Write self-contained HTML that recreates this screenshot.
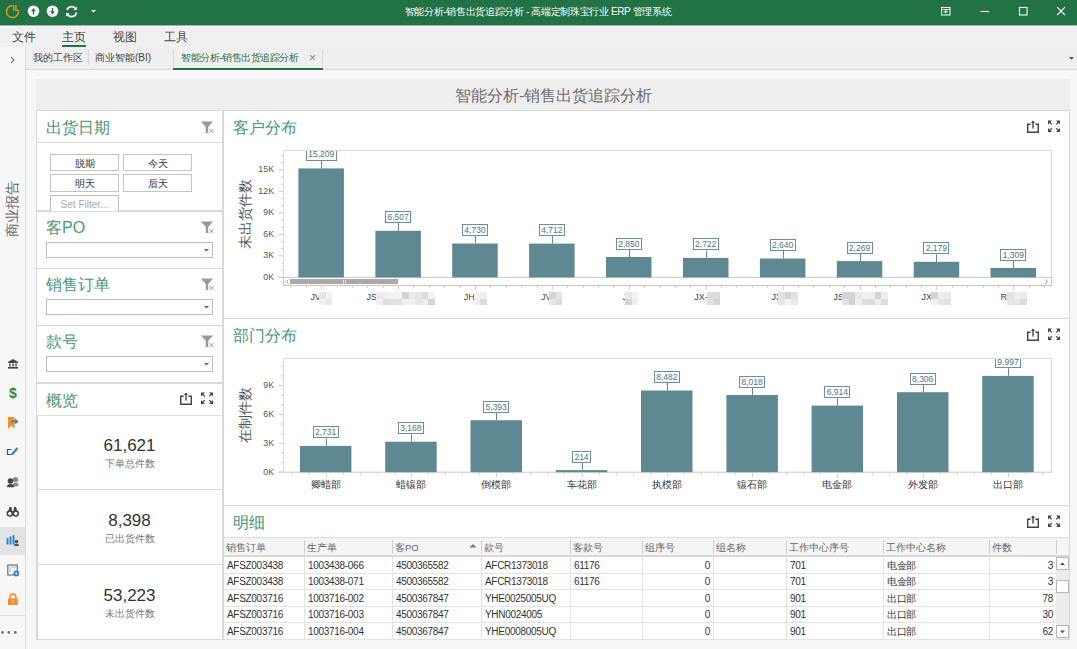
<!DOCTYPE html><html><head><meta charset="utf-8"><style>
*{box-sizing:border-box;margin:0;padding:0}
html,body{width:1077px;height:649px;overflow:hidden;background:#f7f7f7;font-family:"Liberation Sans",sans-serif;color:#333}
.a{position:absolute}
.t{position:absolute;white-space:nowrap;line-height:1}
svg{position:absolute;overflow:visible}
</style></head><body>
<div class="a" style="left:0;top:0;width:1077px;height:25px;background:#217346"></div>
<div class="a" style="left:0;top:25px;width:1077px;height:1px;background:#98b8a4"></div><div class="a" style="left:0;top:26px;width:1077px;height:1px;background:#f8f8f8"></div>
<svg style="left:0;top:0" width="1077" height="25">
<path d="M12.5 5.5 A6 6 0 1 0 18.5 11.5" fill="none" stroke="#e8980c" stroke-width="1.6"/>
<path d="M13.6 5 V10.4 M15.9 5 V10.4 H19" fill="none" stroke="#e8980c" stroke-width="1.4"/>
<circle cx="33.5" cy="11.2" r="5.8" fill="#fff"/>
<path d="M31.1 11.2 H35.9 L33.5 8 Z" fill="#217346"/><rect x="32.8" y="10.6" width="1.4" height="3.6" fill="#217346"/>
<circle cx="52.5" cy="11.2" r="5.8" fill="#fff"/>
<path d="M50.1 11.2 H54.9 L52.5 14.4 Z" fill="#217346"/><rect x="51.8" y="8" width="1.4" height="3.6" fill="#217346"/>
<path d="M67 10 A5 5 0 0 1 76 9" fill="none" stroke="#fff" stroke-width="1.6"/>
<path d="M77 6.5 V10 H73.5 Z" fill="#fff"/>
<path d="M76.5 12.5 A5 5 0 0 1 67.2 14" fill="none" stroke="#fff" stroke-width="1.6"/>
<path d="M66 16.5 V13 H69.5 Z" fill="#fff"/>
<path d="M91 10 H96 L93.5 12.6 Z" fill="#fff"/>
<rect x="941.5" y="7.5" width="8.5" height="7.5" fill="none" stroke="#fff" stroke-width="1"/>
<path d="M941.5 9.5 H950 M943.5 11.8 H948 M945.7 10.2 V13.5" fill="none" stroke="#fff" stroke-width="1"/>
<path d="M980.5 11.5 H989" stroke="#fff" stroke-width="1.1"/>
<rect x="1019.5" y="7.5" width="7.5" height="7.5" fill="none" stroke="#fff" stroke-width="1.1"/>
<path d="M1057.2 7.2 L1065 15 M1065 7.2 L1057.2 15" stroke="#fff" stroke-width="1.1"/>
</svg>
<div class="t" style="left:400px;top:7px;width:276px;font-size:10px;letter-spacing:-0.35px;color:#fff;text-align:center">智能分析-销售出货追踪分析 - 高端定制珠宝行业 ERP 管理系统</div>
<div class="a" style="left:0;top:27px;width:1077px;height:20px;background:#f0f0f0"></div>
<div class="t" style="left:12px;top:31px;font-size:12px;color:#4a4a4a">文件</div>
<div class="t" style="left:62px;top:31px;font-size:12px;color:#3a3a3a">主页</div>
<div class="t" style="left:113px;top:31px;font-size:12px;color:#4a4a4a">视图</div>
<div class="t" style="left:164px;top:31px;font-size:12px;color:#4a4a4a">工具</div>
<div class="a" style="left:62px;top:45px;width:24px;height:2px;background:#217346"></div>
<div class="a" style="left:0;top:47px;width:25px;height:602px;background:#f7f7f7"></div>
<div class="a" style="left:25px;top:47px;width:1px;height:602px;background:#dedede"></div>
<div class="a" style="left:0;top:527px;width:25px;height:28px;background:#e3e3e3"></div>
<div class="a" style="left:0;top:615px;width:25px;height:1px;background:#e0e0e0"></div>
<div class="t" style="left:-17px;top:202px;width:58px;font-size:14px;color:#666;transform:rotate(-90deg);transform-origin:29px 7px;text-align:center">商业报告</div>
<div class="a" style="left:26px;top:47px;width:1051px;height:22px;background:#efefef"></div>
<div class="a" style="left:26px;top:69px;width:1051px;height:1px;background:#d8d8d8"></div>
<div class="t" style="left:33px;top:53px;font-size:9.6px;color:#444">我的工作区</div>
<div class="a" style="left:88px;top:50px;width:1px;height:15px;background:#dadada"></div>
<div class="t" style="left:95px;top:53px;font-size:10px;color:#444">商业智能(BI)</div>
<div class="a" style="left:173px;top:50px;width:1px;height:17px;background:#dadada"></div>
<div class="a" style="left:322px;top:50px;width:1px;height:17px;background:#dadada"></div>
<div class="t" style="left:181px;top:53px;font-size:10px;letter-spacing:-0.45px;color:#217346">智能分析-销售出货追踪分析</div>
<div class="a" style="left:173px;top:68px;width:150px;height:2px;background:#217346"></div>
<div class="a" style="left:36px;top:79px;width:1034px;height:32px;background:#eeeeee"></div>
<div class="t" style="left:455px;top:88px;width:196px;font-size:16px;color:#6e6e6e;text-align:center">智能分析-销售出货追踪分析</div>
<svg style="left:0;top:0" width="26" height="649">
<path d="M11 57 L14 60 L11 63" fill="none" stroke="#777" stroke-width="1.1"/>
<path d="M8 362 L13 359 L18 362 Z" fill="#444"/>
<rect x="8" y="362" width="10" height="1" fill="#444"/>
<rect x="9.3" y="363.5" width="1.4" height="3" fill="#444"/><rect x="12.3" y="363.5" width="1.4" height="3" fill="#444"/><rect x="15.3" y="363.5" width="1.4" height="3" fill="#444"/>
<rect x="8" y="367" width="10" height="1.6" fill="#444"/>
<text x="13" y="398" font-family="Liberation Sans" font-weight="bold" font-size="14" fill="#1e8c45" text-anchor="middle">$</text>
<path d="M8 417 H14.5 V429 L11.25 425.5 L8 429 Z" fill="#f58d2a"/>
<path d="M11.5 421.5 H15.5" stroke="#2a8ad6" stroke-width="2"/>
<path d="M15 418.5 L18.5 421.5 L15 424.5 Z" fill="#2a8ad6"/>
<path d="M11.5 449.5 H7.5 V454.5 H12" fill="none" stroke="#555" stroke-width="1.2"/>
<path d="M12 454.5 L17.5 448" stroke="#2a8ad6" stroke-width="2.2"/>
<circle cx="15.5" cy="479.5" r="2.6" fill="#888"/>
<path d="M12.5 487 Q12.5 482.5 15.5 482.5 Q18.5 482.5 18.5 486 Z" fill="#888"/>
<circle cx="10.5" cy="481" r="2.8" fill="#444"/>
<path d="M7 487.3 Q7 484 10.5 484 Q14 484 14 487.3 Z" fill="#444"/>
<circle cx="9.8" cy="513.5" r="2.5" fill="none" stroke="#444" stroke-width="1.5"/>
<circle cx="15.8" cy="513.5" r="2.5" fill="none" stroke="#444" stroke-width="1.5"/>
<path d="M8 512 L9.5 507 H11.5 L12 511 H13.5 L14 507 H16 L17.5 512 Z" fill="#444"/>
<rect x="6.5" y="538" width="2" height="6.5" fill="#2a8ad6"/>
<rect x="9.5" y="536.5" width="2" height="8" fill="#2a8ad6"/>
<rect x="12.5" y="535.2" width="2" height="9.3" fill="#2a8ad6"/>
<circle cx="16.5" cy="541.5" r="1.8" fill="#555"/>
<path d="M14 546 Q14 543.5 16.5 543.5 Q19 543.5 19 546 Z" fill="#555"/>
<rect x="7.8" y="565" width="9.5" height="10" fill="none" stroke="#666" stroke-width="1.1"/>
<rect x="9.5" y="566.5" width="1" height="6" fill="#8cc0ea"/><rect x="11.5" y="566.5" width="5" height="1" fill="#8cc0ea"/>
<circle cx="16.3" cy="573.5" r="2.9" fill="#2a8ad6"/><circle cx="16.3" cy="573.5" r="1" fill="#fff"/>
<path d="M10 599 V597 A2.9 2.9 0 0 1 15.8 597 V599" fill="none" stroke="#f58d2a" stroke-width="1.6"/>
<rect x="8" y="598.5" width="9.8" height="6.5" fill="#f58d2a"/>
<rect x="12.4" y="600" width="1" height="1.2" fill="#fff"/><rect x="12.4" y="602.2" width="1" height="1.2" fill="#fff"/>
<circle cx="2.5" cy="632.5" r="1.4" fill="#777"/><circle cx="8.8" cy="632.5" r="1.4" fill="#777"/><circle cx="15.3" cy="632.5" r="1.4" fill="#777"/>
</svg>
<svg style="left:1065px;top:54px" width="12" height="10"><path d="M4 3 H9 L6.5 5.8 Z" fill="#555"/></svg>
<div class="t" style="left:309px;top:52px;font-size:12px;color:#888">×</div>
<div class="a" style="left:36px;top:110px;width:187px;height:101px;background:#fff;border:1px solid #d9d9d9"></div>
<div class="t" style="left:46px;top:120px;font-size:16px;color:#4a9676">出货日期</div>
<svg style="left:201px;top:121px" width="16" height="14"><path d="M0 0.5 H12 L7.2 6 V12 H4.8 V6 Z" fill="#999"/><path d="M8.5 8 L12.5 12 M12.5 8 L8.5 12" stroke="#999" stroke-width="1"/></svg>
<div class="a" style="left:37px;top:142px;width:185px;height:1px;background:#e0e0e0"></div>
<div class="a" style="left:50px;top:154px;width:69px;height:17px;border:1px solid #c4c4c4;background:#fff;font-size:10px;color:#333;text-align:center;line-height:17px;white-space:nowrap;overflow:hidden">脱期</div>
<div class="a" style="left:123px;top:154px;width:69px;height:17px;border:1px solid #c4c4c4;background:#fff;font-size:10px;color:#333;text-align:center;line-height:17px;white-space:nowrap;overflow:hidden">今天</div>
<div class="a" style="left:50px;top:174px;width:69px;height:18px;border:1px solid #c4c4c4;background:#fff;font-size:10px;color:#333;text-align:center;line-height:18px;white-space:nowrap;overflow:hidden">明天</div>
<div class="a" style="left:123px;top:174px;width:69px;height:18px;border:1px solid #c4c4c4;background:#fff;font-size:10px;color:#333;text-align:center;line-height:18px;white-space:nowrap;overflow:hidden">后天</div>
<div class="a" style="left:50px;top:195px;width:69px;height:16px;border:1px solid #bdbdbd;border-bottom:none;background:#fff;font-size:10px;color:#aaa;text-align:center;line-height:18px;white-space:nowrap;overflow:hidden">Set Filter...</div>
<div class="a" style="left:36px;top:211px;width:187px;height:1px;background:#d9d9d9"></div>
<div class="a" style="left:36px;top:211px;width:187px;height:58px;background:#fff;border:1px solid #d9d9d9"></div>
<div class="t" style="left:46px;top:220px;font-size:16px;color:#4a9676">客PO</div>
<svg style="left:201px;top:221px" width="16" height="14"><path d="M0 0.5 H12 L7.2 6 V12 H4.8 V6 Z" fill="#999"/><path d="M8.5 8 L12.5 12 M12.5 8 L8.5 12" stroke="#999" stroke-width="1"/></svg>
<div class="a" style="left:46px;top:242px;width:167px;height:16px;border:1px solid #bdbdbd;background:#fff"></div>
<svg style="left:203px;top:247px" width="8" height="6"><path d="M1 2 H6 L3.5 4.5 Z" fill="#666"/></svg>
<div class="a" style="left:36px;top:268px;width:187px;height:58px;background:#fff;border:1px solid #d9d9d9"></div>
<div class="t" style="left:46px;top:277px;font-size:16px;color:#4a9676">销售订单</div>
<svg style="left:201px;top:278px" width="16" height="14"><path d="M0 0.5 H12 L7.2 6 V12 H4.8 V6 Z" fill="#999"/><path d="M8.5 8 L12.5 12 M12.5 8 L8.5 12" stroke="#999" stroke-width="1"/></svg>
<div class="a" style="left:46px;top:299px;width:167px;height:16px;border:1px solid #bdbdbd;background:#fff"></div>
<svg style="left:203px;top:304px" width="8" height="6"><path d="M1 2 H6 L3.5 4.5 Z" fill="#666"/></svg>
<div class="a" style="left:36px;top:325px;width:187px;height:58px;background:#fff;border:1px solid #d9d9d9"></div>
<div class="t" style="left:46px;top:334px;font-size:16px;color:#4a9676">款号</div>
<svg style="left:201px;top:335px" width="16" height="14"><path d="M0 0.5 H12 L7.2 6 V12 H4.8 V6 Z" fill="#999"/><path d="M8.5 8 L12.5 12 M12.5 8 L8.5 12" stroke="#999" stroke-width="1"/></svg>
<div class="a" style="left:46px;top:356px;width:167px;height:16px;border:1px solid #bdbdbd;background:#fff"></div>
<svg style="left:203px;top:361px" width="8" height="6"><path d="M1 2 H6 L3.5 4.5 Z" fill="#666"/></svg>
<div class="a" style="left:36px;top:383px;width:187px;height:257px;background:#fff;border:1px solid #d9d9d9"></div>
<div class="t" style="left:46px;top:393px;font-size:16px;color:#4a9676">概览</div>
<svg style="left:180px;top:392px" width="36" height="14">
<path d="M3.6 4.3 H0.7 V12.3 H11.3 V4.3 H8.4" fill="none" stroke="#444" stroke-width="1.4"/>
<path d="M6 1 V8.5" stroke="#444" stroke-width="1.4"/>
<path d="M4 3 L6 0.5 L8 3 Z" fill="#444"/>
<path d="M21 0.5 H25 L21 4.5 Z M33 0.5 H29 L33 4.5 Z M21 12 H25 L21 8 Z M33 12 H29 L33 8 Z" fill="#444"/>
<path d="M22 1.5 L24.8 4.3 M32 1.5 L29.2 4.3 M22 11 L24.8 8.2 M32 11 L29.2 8.2" stroke="#444" stroke-width="1.2"/>
</svg>
<div class="a" style="left:37px;top:415px;width:185px;height:1px;background:#e0e0e0"></div>
<div class="a" style="left:37px;top:415px;width:1px;height:224px;background:#d9d9d9"></div>
<div class="a" style="left:37px;top:489px;width:185px;height:1px;background:#d9d9d9"></div>
<div class="a" style="left:37px;top:564px;width:185px;height:1px;background:#d9d9d9"></div>
<div class="t" style="left:37px;top:437px;width:185px;text-align:center;font-size:17px;color:#333">61,621</div>
<div class="t" style="left:37px;top:459px;width:185px;text-align:center;font-size:10px;color:#777">下单总件数</div>
<div class="t" style="left:37px;top:512px;width:185px;text-align:center;font-size:17px;color:#333">8,398</div>
<div class="t" style="left:37px;top:534px;width:185px;text-align:center;font-size:10px;color:#777">已出货件数</div>
<div class="t" style="left:37px;top:587px;width:185px;text-align:center;font-size:17px;color:#333">53,223</div>
<div class="t" style="left:37px;top:609px;width:185px;text-align:center;font-size:10px;color:#777">未出货件数</div>
<div class="a" style="left:223px;top:110px;width:847px;height:209px;background:#fff;border:1px solid #d9d9d9"></div>
<div class="t" style="left:233px;top:120px;font-size:16px;color:#4a9676">客户分布</div>
<svg style="left:1027px;top:120px" width="36" height="14">
<path d="M3.6 4.3 H0.7 V12.3 H11.3 V4.3 H8.4" fill="none" stroke="#444" stroke-width="1.4"/>
<path d="M6 1 V8.5" stroke="#444" stroke-width="1.4"/>
<path d="M4 3 L6 0.5 L8 3 Z" fill="#444"/>
<path d="M21 0.5 H25 L21 4.5 Z M33 0.5 H29 L33 4.5 Z M21 12 H25 L21 8 Z M33 12 H29 L33 8 Z" fill="#444"/>
<path d="M22 1.5 L24.8 4.3 M32 1.5 L29.2 4.3 M22 11 L24.8 8.2 M32 11 L29.2 8.2" stroke="#444" stroke-width="1.2"/>
</svg>
<div class="a" style="left:223px;top:318px;width:847px;height:188px;background:#fff;border:1px solid #d9d9d9"></div>
<div class="t" style="left:233px;top:328px;font-size:16px;color:#4a9676">部门分布</div>
<svg style="left:1027px;top:328px" width="36" height="14">
<path d="M3.6 4.3 H0.7 V12.3 H11.3 V4.3 H8.4" fill="none" stroke="#444" stroke-width="1.4"/>
<path d="M6 1 V8.5" stroke="#444" stroke-width="1.4"/>
<path d="M4 3 L6 0.5 L8 3 Z" fill="#444"/>
<path d="M21 0.5 H25 L21 4.5 Z M33 0.5 H29 L33 4.5 Z M21 12 H25 L21 8 Z M33 12 H29 L33 8 Z" fill="#444"/>
<path d="M22 1.5 L24.8 4.3 M32 1.5 L29.2 4.3 M22 11 L24.8 8.2 M32 11 L29.2 8.2" stroke="#444" stroke-width="1.2"/>
</svg>
<div class="a" style="left:223px;top:505px;width:847px;height:135px;background:#fff;border:1px solid #d9d9d9"></div>
<div class="t" style="left:233px;top:515px;font-size:16px;color:#4a9676">明细</div>
<svg style="left:1027px;top:515px" width="36" height="14">
<path d="M3.6 4.3 H0.7 V12.3 H11.3 V4.3 H8.4" fill="none" stroke="#444" stroke-width="1.4"/>
<path d="M6 1 V8.5" stroke="#444" stroke-width="1.4"/>
<path d="M4 3 L6 0.5 L8 3 Z" fill="#444"/>
<path d="M21 0.5 H25 L21 4.5 Z M33 0.5 H29 L33 4.5 Z M21 12 H25 L21 8 Z M33 12 H29 L33 8 Z" fill="#444"/>
<path d="M22 1.5 L24.8 4.3 M32 1.5 L29.2 4.3 M22 11 L24.8 8.2 M32 11 L29.2 8.2" stroke="#444" stroke-width="1.2"/>
</svg>
<div class="a" style="left:283px;top:150px;width:769px;height:136px;border:1px solid #dcdcdc;border-bottom:none"></div>
<svg style="left:0;top:0" width="1077" height="649">
<path d="M279 277.4 H1052" stroke="#c8c8c8" stroke-width="1"/>
<path d="M279 277.4 H283" stroke="#c8c8c8" stroke-width="1"/>
<path d="M281 270.2 H283" stroke="#c8c8c8" stroke-width="1"/>
<path d="M281 263.1 H283" stroke="#c8c8c8" stroke-width="1"/>
<path d="M279 255.9 H283" stroke="#c8c8c8" stroke-width="1"/>
<path d="M281 248.7 H283" stroke="#c8c8c8" stroke-width="1"/>
<path d="M281 241.6 H283" stroke="#c8c8c8" stroke-width="1"/>
<path d="M279 234.4 H283" stroke="#c8c8c8" stroke-width="1"/>
<path d="M281 227.2 H283" stroke="#c8c8c8" stroke-width="1"/>
<path d="M281 220.1 H283" stroke="#c8c8c8" stroke-width="1"/>
<path d="M279 212.9 H283" stroke="#c8c8c8" stroke-width="1"/>
<path d="M281 205.7 H283" stroke="#c8c8c8" stroke-width="1"/>
<path d="M281 198.6 H283" stroke="#c8c8c8" stroke-width="1"/>
<path d="M279 191.4 H283" stroke="#c8c8c8" stroke-width="1"/>
<path d="M281 184.2 H283" stroke="#c8c8c8" stroke-width="1"/>
<path d="M281 177.1 H283" stroke="#c8c8c8" stroke-width="1"/>
<path d="M279 169.9 H283" stroke="#c8c8c8" stroke-width="1"/>
<path d="M281 162.7 H283" stroke="#c8c8c8" stroke-width="1"/>
<path d="M281 155.6 H283" stroke="#c8c8c8" stroke-width="1"/>
<rect x="298.4" y="168.4" width="45.5" height="109.0" fill="#5f8992"/>
<path d="M321.5 168.4 V160.9" stroke="#5f8992" stroke-width="1"/>
<rect x="375.4" y="230.8" width="45.5" height="46.6" fill="#5f8992"/>
<path d="M398.5 230.8 V223.3" stroke="#5f8992" stroke-width="1"/>
<rect x="452.2" y="243.5" width="45.5" height="33.9" fill="#5f8992"/>
<path d="M475.5 243.5 V236.0" stroke="#5f8992" stroke-width="1"/>
<rect x="529.1" y="243.6" width="45.5" height="33.8" fill="#5f8992"/>
<path d="M552.5 243.6 V236.1" stroke="#5f8992" stroke-width="1"/>
<rect x="606.0" y="257.0" width="45.5" height="20.4" fill="#5f8992"/>
<path d="M629.5 257.0 V249.5" stroke="#5f8992" stroke-width="1"/>
<rect x="683.0" y="257.9" width="45.5" height="19.5" fill="#5f8992"/>
<path d="M706.5 257.9 V250.4" stroke="#5f8992" stroke-width="1"/>
<rect x="759.9" y="258.5" width="45.5" height="18.9" fill="#5f8992"/>
<path d="M783.5 258.5 V251.0" stroke="#5f8992" stroke-width="1"/>
<rect x="836.8" y="261.1" width="45.5" height="16.3" fill="#5f8992"/>
<path d="M860.5 261.1 V253.6" stroke="#5f8992" stroke-width="1"/>
<rect x="913.7" y="261.8" width="45.5" height="15.6" fill="#5f8992"/>
<path d="M936.5 261.8 V254.3" stroke="#5f8992" stroke-width="1"/>
<rect x="990.5" y="268.0" width="45.5" height="9.4" fill="#5f8992"/>
<path d="M1013.5 268.0 V260.5" stroke="#5f8992" stroke-width="1"/>
</svg>
<div class="a" style="left:305.7px;top:151.0px;width:31px;height:9.9px;border:1px solid #6a9099;border-top:none;background:#fff;font-size:8.5px;color:#4f7580;text-align:center;line-height:6.9px;white-space:nowrap">15,209</div>
<div class="a" style="left:385.1px;top:211.3px;width:26px;height:12px;border:1px solid #6a9099;background:#fff;font-size:8.5px;color:#4f7580;text-align:center;line-height:10px;white-space:nowrap">6,507</div>
<div class="a" style="left:462.0px;top:224.0px;width:26px;height:12px;border:1px solid #6a9099;background:#fff;font-size:8.5px;color:#4f7580;text-align:center;line-height:10px;white-space:nowrap">4,730</div>
<div class="a" style="left:538.9px;top:224.1px;width:26px;height:12px;border:1px solid #6a9099;background:#fff;font-size:8.5px;color:#4f7580;text-align:center;line-height:10px;white-space:nowrap">4,712</div>
<div class="a" style="left:615.8px;top:237.5px;width:26px;height:12px;border:1px solid #6a9099;background:#fff;font-size:8.5px;color:#4f7580;text-align:center;line-height:10px;white-space:nowrap">2,850</div>
<div class="a" style="left:692.7px;top:238.4px;width:26px;height:12px;border:1px solid #6a9099;background:#fff;font-size:8.5px;color:#4f7580;text-align:center;line-height:10px;white-space:nowrap">2,722</div>
<div class="a" style="left:769.6px;top:239.0px;width:26px;height:12px;border:1px solid #6a9099;background:#fff;font-size:8.5px;color:#4f7580;text-align:center;line-height:10px;white-space:nowrap">2,640</div>
<div class="a" style="left:846.5px;top:241.6px;width:26px;height:12px;border:1px solid #6a9099;background:#fff;font-size:8.5px;color:#4f7580;text-align:center;line-height:10px;white-space:nowrap">2,269</div>
<div class="a" style="left:923.4px;top:242.3px;width:26px;height:12px;border:1px solid #6a9099;background:#fff;font-size:8.5px;color:#4f7580;text-align:center;line-height:10px;white-space:nowrap">2,179</div>
<div class="a" style="left:1000.3px;top:248.5px;width:26px;height:12px;border:1px solid #6a9099;background:#fff;font-size:8.5px;color:#4f7580;text-align:center;line-height:10px;white-space:nowrap">1,309</div>
<div class="t" style="left:239px;top:272.9px;width:35px;text-align:right;font-size:8.8px;color:#555">0K</div>
<div class="t" style="left:239px;top:251.4px;width:35px;text-align:right;font-size:8.8px;color:#555">3K</div>
<div class="t" style="left:239px;top:229.9px;width:35px;text-align:right;font-size:8.8px;color:#555">6K</div>
<div class="t" style="left:239px;top:208.4px;width:35px;text-align:right;font-size:8.8px;color:#555">9K</div>
<div class="t" style="left:239px;top:186.9px;width:35px;text-align:right;font-size:8.8px;color:#555">12K</div>
<div class="t" style="left:239px;top:165.4px;width:35px;text-align:right;font-size:8.8px;color:#555">15K</div>
<div class="t" style="left:205px;top:206.8px;width:80px;height:14px;text-align:center;font-size:14px;color:#555;transform:rotate(-90deg)">未出货件数</div>
<div class="a" style="left:283px;top:278px;width:769px;height:8px;border:1px solid #c8c8c8;border-top:none;background:#fff"></div>
<div class="a" style="left:290px;top:279px;width:108px;height:5px;background:#a9a9a9"></div>
<svg style="left:0;top:0" width="1077" height="649"><path d="M288.5 279.5 L286.5 281.5 L288.5 283.5 M1045.5 279.5 L1047.5 281.5 L1045.5 283.5" fill="none" stroke="#888" stroke-width="0.8"/><path d="M343.5 280 V283.5 M345.5 280 V283.5" stroke="#e4e4e4" stroke-width="1"/></svg>
<svg style="left:0;top:0" width="1077" height="649"><path d="M290.5 286 V288 M306.5 286 V288 M337.5 286 V288 M352.5 286 V288 M321.5 286 V290 M367.5 286 V288 M383.5 286 V288 M413.5 286 V288 M429.5 286 V288 M398.5 286 V290 M444.5 286 V288 M460.5 286 V288 M490.5 286 V288 M506.5 286 V288 M475.5 286 V290 M521.5 286 V288 M537.5 286 V288 M567.5 286 V288 M583.5 286 V288 M552.5 286 V290 M598.5 286 V288 M613.5 286 V288 M644.5 286 V288 M660.5 286 V288 M629.5 286 V290 M675.5 286 V288 M690.5 286 V288 M721.5 286 V288 M736.5 286 V288 M706.5 286 V290 M752.5 286 V288 M767.5 286 V288 M798.5 286 V288 M813.5 286 V288 M783.5 286 V290 M829.5 286 V288 M844.5 286 V288 M875.5 286 V288 M890.5 286 V288 M860.5 286 V290 M906.5 286 V288 M921.5 286 V288 M952.5 286 V288 M967.5 286 V288 M936.5 286 V290 M983.5 286 V288 M998.5 286 V288 M1029.5 286 V288 M1044.5 286 V288 M1013.5 286 V290" stroke="#d2d2d2" stroke-width="1"/></svg>
<div class="t" style="left:310.5px;top:293px;font-size:9px;color:#444">JV</div>
<div class="a" style="left:319.0px;top:292px;width:13.0px;height:13px;background:#eeeeee"></div>
<div class="a" style="left:319.0px;top:292px;width:6.5px;height:6.5px;background:#e6e6e8"></div>
<div class="a" style="left:319.0px;top:298.5px;width:6.5px;height:6.5px;background:#f2f2f4"></div>
<div class="a" style="left:325.5px;top:292px;width:6.5px;height:6.5px;background:#f2f2f4"></div>
<div class="a" style="left:325.5px;top:298.5px;width:6.5px;height:6.5px;background:#e6e6e8"></div>
<div class="t" style="left:366.5px;top:293px;font-size:9px;color:#444">JS</div>
<div class="a" style="left:376.0px;top:292px;width:58.0px;height:13px;background:#eeeeee"></div>
<div class="a" style="left:376.0px;top:292px;width:6.5px;height:6.5px;background:#eaeaec"></div>
<div class="a" style="left:376.0px;top:298.5px;width:6.5px;height:6.5px;background:#f2f2f4"></div>
<div class="a" style="left:382.5px;top:292px;width:6.5px;height:6.5px;background:#eeeef0"></div>
<div class="a" style="left:382.5px;top:298.5px;width:6.5px;height:6.5px;background:#dcdcde"></div>
<div class="a" style="left:389.0px;top:292px;width:6.5px;height:6.5px;background:#f2f2f4"></div>
<div class="a" style="left:389.0px;top:298.5px;width:6.5px;height:6.5px;background:#e2e2e4"></div>
<div class="a" style="left:395.5px;top:292px;width:6.5px;height:6.5px;background:#f2f2f4"></div>
<div class="a" style="left:395.5px;top:298.5px;width:6.5px;height:6.5px;background:#e2e2e4"></div>
<div class="a" style="left:402.0px;top:292px;width:6.5px;height:6.5px;background:#d4d4d6"></div>
<div class="a" style="left:402.0px;top:298.5px;width:6.5px;height:6.5px;background:#eeeef0"></div>
<div class="a" style="left:408.5px;top:292px;width:6.5px;height:6.5px;background:#eaeaec"></div>
<div class="a" style="left:408.5px;top:298.5px;width:6.5px;height:6.5px;background:#f2f2f4"></div>
<div class="a" style="left:415.0px;top:292px;width:6.5px;height:6.5px;background:#e6e6e8"></div>
<div class="a" style="left:415.0px;top:298.5px;width:6.5px;height:6.5px;background:#e6e6e8"></div>
<div class="a" style="left:421.5px;top:292px;width:6.5px;height:6.5px;background:#dcdcde"></div>
<div class="a" style="left:421.5px;top:298.5px;width:6.5px;height:6.5px;background:#eeeef0"></div>
<div class="a" style="left:428.0px;top:292px;width:6.5px;height:6.5px;background:#f2f2f4"></div>
<div class="a" style="left:428.0px;top:298.5px;width:6.5px;height:6.5px;background:#d4d4d6"></div>
<div class="t" style="left:463.8px;top:293px;font-size:9px;color:#444">JH</div>
<div class="a" style="left:473.5px;top:292px;width:12.0px;height:13px;background:#eeeeee"></div>
<div class="a" style="left:473.5px;top:292px;width:6.5px;height:6.5px;background:#f2f2f4"></div>
<div class="a" style="left:473.5px;top:298.5px;width:6.5px;height:6.5px;background:#eeeef0"></div>
<div class="a" style="left:480.0px;top:292px;width:6.5px;height:6.5px;background:#eeeef0"></div>
<div class="a" style="left:480.0px;top:298.5px;width:6.5px;height:6.5px;background:#dcdcde"></div>
<div class="t" style="left:540.9px;top:293px;font-size:9px;color:#444">JV</div>
<div class="a" style="left:549.3px;top:292px;width:12.0px;height:13px;background:#eeeeee"></div>
<div class="a" style="left:549.3px;top:292px;width:6.5px;height:6.5px;background:#d4d4d6"></div>
<div class="a" style="left:549.3px;top:298.5px;width:6.5px;height:6.5px;background:#e6e6e8"></div>
<div class="a" style="left:555.8px;top:292px;width:6.5px;height:6.5px;background:#e6e6e8"></div>
<div class="a" style="left:555.8px;top:298.5px;width:6.5px;height:6.5px;background:#dcdcde"></div>
<div class="t" style="left:622.7px;top:293px;font-size:9px;color:#444">J</div>
<div class="a" style="left:625.0px;top:292px;width:12.2px;height:13px;background:#eeeeee"></div>
<div class="a" style="left:625.0px;top:292px;width:6.5px;height:6.5px;background:#e6e6e8"></div>
<div class="a" style="left:625.0px;top:298.5px;width:6.5px;height:6.5px;background:#d4d4d6"></div>
<div class="a" style="left:631.5px;top:292px;width:6.5px;height:6.5px;background:#f2f2f4"></div>
<div class="a" style="left:631.5px;top:298.5px;width:6.5px;height:6.5px;background:#eeeef0"></div>
<div class="t" style="left:694.3px;top:293px;font-size:9px;color:#444">JX-</div>
<div class="a" style="left:707.0px;top:292px;width:13.3px;height:13px;background:#eeeeee"></div>
<div class="a" style="left:707.0px;top:292px;width:6.5px;height:6.5px;background:#dcdcde"></div>
<div class="a" style="left:707.0px;top:298.5px;width:6.5px;height:6.5px;background:#e2e2e4"></div>
<div class="a" style="left:713.5px;top:292px;width:6.5px;height:6.5px;background:#dcdcde"></div>
<div class="a" style="left:713.5px;top:298.5px;width:6.5px;height:6.5px;background:#d4d4d6"></div>
<div class="t" style="left:771.4px;top:293px;font-size:9px;color:#444">JX</div>
<div class="a" style="left:778.0px;top:292px;width:19.4px;height:13px;background:#eeeeee"></div>
<div class="a" style="left:778.0px;top:292px;width:6.5px;height:6.5px;background:#e2e2e4"></div>
<div class="a" style="left:778.0px;top:298.5px;width:6.5px;height:6.5px;background:#e6e6e8"></div>
<div class="a" style="left:784.5px;top:292px;width:6.5px;height:6.5px;background:#d4d4d6"></div>
<div class="a" style="left:784.5px;top:298.5px;width:6.5px;height:6.5px;background:#f2f2f4"></div>
<div class="a" style="left:791.0px;top:292px;width:6.5px;height:6.5px;background:#e2e2e4"></div>
<div class="a" style="left:791.0px;top:298.5px;width:6.5px;height:6.5px;background:#eaeaec"></div>
<div class="t" style="left:833.5px;top:293px;font-size:9px;color:#444">JS</div>
<div class="a" style="left:842.0px;top:292px;width:44.7px;height:13px;background:#eeeeee"></div>
<div class="a" style="left:842.0px;top:292px;width:6.5px;height:6.5px;background:#d4d4d6"></div>
<div class="a" style="left:842.0px;top:298.5px;width:6.5px;height:6.5px;background:#e2e2e4"></div>
<div class="a" style="left:848.5px;top:292px;width:6.5px;height:6.5px;background:#d4d4d6"></div>
<div class="a" style="left:848.5px;top:298.5px;width:6.5px;height:6.5px;background:#d4d4d6"></div>
<div class="a" style="left:855.0px;top:292px;width:6.5px;height:6.5px;background:#eaeaec"></div>
<div class="a" style="left:855.0px;top:298.5px;width:6.5px;height:6.5px;background:#eeeef0"></div>
<div class="a" style="left:861.5px;top:292px;width:6.5px;height:6.5px;background:#f2f2f4"></div>
<div class="a" style="left:861.5px;top:298.5px;width:6.5px;height:6.5px;background:#dcdcde"></div>
<div class="a" style="left:868.0px;top:292px;width:6.5px;height:6.5px;background:#eeeef0"></div>
<div class="a" style="left:868.0px;top:298.5px;width:6.5px;height:6.5px;background:#dcdcde"></div>
<div class="a" style="left:874.5px;top:292px;width:6.5px;height:6.5px;background:#d4d4d6"></div>
<div class="a" style="left:874.5px;top:298.5px;width:6.5px;height:6.5px;background:#eeeef0"></div>
<div class="a" style="left:881.0px;top:292px;width:6.5px;height:6.5px;background:#eeeef0"></div>
<div class="a" style="left:881.0px;top:298.5px;width:6.5px;height:6.5px;background:#dcdcde"></div>
<div class="t" style="left:921.5px;top:293px;font-size:9px;color:#444">JX</div>
<div class="a" style="left:931.3px;top:292px;width:19.1px;height:13px;background:#eeeeee"></div>
<div class="a" style="left:931.3px;top:292px;width:6.5px;height:6.5px;background:#d4d4d6"></div>
<div class="a" style="left:931.3px;top:298.5px;width:6.5px;height:6.5px;background:#f2f2f4"></div>
<div class="a" style="left:937.8px;top:292px;width:6.5px;height:6.5px;background:#eeeef0"></div>
<div class="a" style="left:937.8px;top:298.5px;width:6.5px;height:6.5px;background:#e6e6e8"></div>
<div class="a" style="left:944.3px;top:292px;width:6.5px;height:6.5px;background:#eaeaec"></div>
<div class="a" style="left:944.3px;top:298.5px;width:6.5px;height:6.5px;background:#e2e2e4"></div>
<div class="t" style="left:1000.6px;top:293px;font-size:9px;color:#444">R</div>
<div class="a" style="left:1007.2px;top:292px;width:19.1px;height:13px;background:#eeeeee"></div>
<div class="a" style="left:1007.2px;top:292px;width:6.5px;height:6.5px;background:#e2e2e4"></div>
<div class="a" style="left:1007.2px;top:298.5px;width:6.5px;height:6.5px;background:#e6e6e8"></div>
<div class="a" style="left:1013.7px;top:292px;width:6.5px;height:6.5px;background:#eeeef0"></div>
<div class="a" style="left:1013.7px;top:298.5px;width:6.5px;height:6.5px;background:#e6e6e8"></div>
<div class="a" style="left:1020.2px;top:292px;width:6.5px;height:6.5px;background:#eaeaec"></div>
<div class="a" style="left:1020.2px;top:298.5px;width:6.5px;height:6.5px;background:#dcdcde"></div>
<div class="a" style="left:283px;top:358px;width:769px;height:115px;border:1px solid #dcdcdc;border-bottom:none"></div>
<svg style="left:0;top:0" width="1077" height="649">
<path d="M279 472.2 H1052" stroke="#c8c8c8" stroke-width="1"/>
<path d="M279 472.2 H283" stroke="#c8c8c8" stroke-width="1"/>
<path d="M281 462.6 H283" stroke="#c8c8c8" stroke-width="1"/>
<path d="M281 452.9 H283" stroke="#c8c8c8" stroke-width="1"/>
<path d="M279 443.3 H283" stroke="#c8c8c8" stroke-width="1"/>
<path d="M281 433.7 H283" stroke="#c8c8c8" stroke-width="1"/>
<path d="M281 424.0 H283" stroke="#c8c8c8" stroke-width="1"/>
<path d="M279 414.4 H283" stroke="#c8c8c8" stroke-width="1"/>
<path d="M281 404.8 H283" stroke="#c8c8c8" stroke-width="1"/>
<path d="M281 395.1 H283" stroke="#c8c8c8" stroke-width="1"/>
<path d="M279 385.5 H283" stroke="#c8c8c8" stroke-width="1"/>
<path d="M281 375.9 H283" stroke="#c8c8c8" stroke-width="1"/>
<path d="M281 366.2 H283" stroke="#c8c8c8" stroke-width="1"/>
<rect x="299.9" y="445.9" width="51.5" height="26.3" fill="#5f8992"/>
<path d="M326.5 445.9 V438.4" stroke="#5f8992" stroke-width="1"/>
<rect x="385.2" y="441.7" width="51.5" height="30.5" fill="#5f8992"/>
<path d="M411.5 441.7 V434.2" stroke="#5f8992" stroke-width="1"/>
<rect x="470.5" y="420.2" width="51.5" height="52.0" fill="#5f8992"/>
<path d="M496.5 420.2 V412.7" stroke="#5f8992" stroke-width="1"/>
<rect x="555.8" y="470.1" width="51.5" height="2.1" fill="#5f8992"/>
<path d="M582.5 470.1 V462.6" stroke="#5f8992" stroke-width="1"/>
<rect x="641.0" y="390.5" width="51.5" height="81.7" fill="#5f8992"/>
<path d="M667.5 390.5 V383.0" stroke="#5f8992" stroke-width="1"/>
<rect x="726.4" y="395.0" width="51.5" height="77.2" fill="#5f8992"/>
<path d="M752.5 395.0 V387.5" stroke="#5f8992" stroke-width="1"/>
<rect x="811.6" y="405.6" width="51.5" height="66.6" fill="#5f8992"/>
<path d="M837.5 405.6 V398.1" stroke="#5f8992" stroke-width="1"/>
<rect x="897.0" y="392.2" width="51.5" height="80.0" fill="#5f8992"/>
<path d="M923.5 392.2 V384.7" stroke="#5f8992" stroke-width="1"/>
<rect x="982.2" y="375.9" width="51.5" height="96.3" fill="#5f8992"/>
<path d="M1008.5 375.9 V368.4" stroke="#5f8992" stroke-width="1"/>
</svg>
<div class="a" style="left:312.6px;top:426.4px;width:26px;height:12px;border:1px solid #6a9099;background:#fff;font-size:8.5px;color:#4f7580;text-align:center;line-height:10px;white-space:nowrap">2,731</div>
<div class="a" style="left:397.9px;top:422.2px;width:26px;height:12px;border:1px solid #6a9099;background:#fff;font-size:8.5px;color:#4f7580;text-align:center;line-height:10px;white-space:nowrap">3,168</div>
<div class="a" style="left:483.2px;top:400.7px;width:26px;height:12px;border:1px solid #6a9099;background:#fff;font-size:8.5px;color:#4f7580;text-align:center;line-height:10px;white-space:nowrap">5,393</div>
<div class="a" style="left:572.0px;top:450.6px;width:19px;height:12px;border:1px solid #6a9099;background:#fff;font-size:8.5px;color:#4f7580;text-align:center;line-height:10px;white-space:nowrap">214</div>
<div class="a" style="left:653.8px;top:371.0px;width:26px;height:12px;border:1px solid #6a9099;background:#fff;font-size:8.5px;color:#4f7580;text-align:center;line-height:10px;white-space:nowrap">8,482</div>
<div class="a" style="left:739.1px;top:375.5px;width:26px;height:12px;border:1px solid #6a9099;background:#fff;font-size:8.5px;color:#4f7580;text-align:center;line-height:10px;white-space:nowrap">8,018</div>
<div class="a" style="left:824.4px;top:386.1px;width:26px;height:12px;border:1px solid #6a9099;background:#fff;font-size:8.5px;color:#4f7580;text-align:center;line-height:10px;white-space:nowrap">6,914</div>
<div class="a" style="left:909.7px;top:372.7px;width:26px;height:12px;border:1px solid #6a9099;background:#fff;font-size:8.5px;color:#4f7580;text-align:center;line-height:10px;white-space:nowrap">8,306</div>
<div class="a" style="left:995.0px;top:359.0px;width:26px;height:9.4px;border:1px solid #6a9099;border-top:none;background:#fff;font-size:8.5px;color:#4f7580;text-align:center;line-height:6.4px;white-space:nowrap">9,997</div>
<div class="t" style="left:239px;top:467.7px;width:35px;text-align:right;font-size:8.8px;color:#555">0K</div>
<div class="t" style="left:239px;top:438.8px;width:35px;text-align:right;font-size:8.8px;color:#555">3K</div>
<div class="t" style="left:239px;top:409.9px;width:35px;text-align:right;font-size:8.8px;color:#555">6K</div>
<div class="t" style="left:239px;top:381.0px;width:35px;text-align:right;font-size:8.8px;color:#555">9K</div>
<div class="t" style="left:205px;top:407.7px;width:80px;height:14px;text-align:center;font-size:14px;color:#555;transform:rotate(-90deg)">在制件数</div>
<svg style="left:0;top:0" width="1077" height="649"><path d="M291.5 473 V475 M309.5 473 V475 M343.5 473 V475 M360.5 473 V475 M326.5 473 V477 M377.5 473 V475 M394.5 473 V475 M428.5 473 V475 M445.5 473 V475 M411.5 473 V477 M462.5 473 V475 M479.5 473 V475 M513.5 473 V475 M530.5 473 V475 M496.5 473 V477 M547.5 473 V475 M564.5 473 V475 M599.5 473 V475 M616.5 473 V475 M582.5 473 V477 M633.5 473 V475 M650.5 473 V475 M684.5 473 V475 M701.5 473 V475 M667.5 473 V477 M718.5 473 V475 M735.5 473 V475 M769.5 473 V475 M786.5 473 V475 M752.5 473 V477 M803.5 473 V475 M820.5 473 V475 M854.5 473 V475 M872.5 473 V475 M837.5 473 V477 M889.5 473 V475 M906.5 473 V475 M940.5 473 V475 M957.5 473 V475 M923.5 473 V477 M974.5 473 V475 M991.5 473 V475 M1025.5 473 V475 M1042.5 473 V475 M1008.5 473 V477" stroke="#d2d2d2" stroke-width="1"/></svg>
<div class="t" style="left:295.6px;top:480px;width:60px;text-align:center;font-size:10px;color:#333">卿蜡部</div>
<div class="t" style="left:380.9px;top:480px;width:60px;text-align:center;font-size:10px;color:#333">蜡镶部</div>
<div class="t" style="left:466.2px;top:480px;width:60px;text-align:center;font-size:10px;color:#333">倒模部</div>
<div class="t" style="left:551.5px;top:480px;width:60px;text-align:center;font-size:10px;color:#333">车花部</div>
<div class="t" style="left:636.8px;top:480px;width:60px;text-align:center;font-size:10px;color:#333">执模部</div>
<div class="t" style="left:722.1px;top:480px;width:60px;text-align:center;font-size:10px;color:#333">镶石部</div>
<div class="t" style="left:807.4px;top:480px;width:60px;text-align:center;font-size:10px;color:#333">电金部</div>
<div class="t" style="left:892.7px;top:480px;width:60px;text-align:center;font-size:10px;color:#333">外发部</div>
<div class="t" style="left:978.0px;top:480px;width:60px;text-align:center;font-size:10px;color:#333">出口部</div>
<div class="a" style="left:224px;top:538px;width:845px;height:18px;background:#f5f5f5"></div>
<div class="a" style="left:224px;top:537px;width:845px;height:1px;background:#dedede"></div>
<div class="a" style="left:224px;top:555px;width:845px;height:2px;background:#d8d8d8"></div>
<div class="t" style="left:226px;top:543px;font-size:9.5px;color:#666">销售订单</div>
<div class="a" style="left:304px;top:540px;width:1px;height:14px;background:#d0d0d0"></div>
<div class="t" style="left:307px;top:543px;font-size:9.5px;color:#666">生产单</div>
<div class="a" style="left:392px;top:540px;width:1px;height:14px;background:#d0d0d0"></div>
<div class="t" style="left:395px;top:543px;font-size:9.5px;color:#666">客PO</div>
<div class="a" style="left:481px;top:540px;width:1px;height:14px;background:#d0d0d0"></div>
<div class="t" style="left:484px;top:543px;font-size:9.5px;color:#666">款号</div>
<div class="a" style="left:570px;top:540px;width:1px;height:14px;background:#d0d0d0"></div>
<div class="t" style="left:573px;top:543px;font-size:9.5px;color:#666">客款号</div>
<div class="a" style="left:642px;top:540px;width:1px;height:14px;background:#d0d0d0"></div>
<div class="t" style="left:645px;top:543px;font-size:9.5px;color:#666">组序号</div>
<div class="a" style="left:713px;top:540px;width:1px;height:14px;background:#d0d0d0"></div>
<div class="t" style="left:716px;top:543px;font-size:9.5px;color:#666">组名称</div>
<div class="a" style="left:786px;top:540px;width:1px;height:14px;background:#d0d0d0"></div>
<div class="t" style="left:789px;top:543px;font-size:9.5px;color:#666">工作中心序号</div>
<div class="a" style="left:883px;top:540px;width:1px;height:14px;background:#d0d0d0"></div>
<div class="t" style="left:886px;top:543px;font-size:9.5px;color:#666">工作中心名称</div>
<div class="a" style="left:989px;top:540px;width:1px;height:14px;background:#d0d0d0"></div>
<div class="t" style="left:992px;top:543px;font-size:9.5px;color:#666">件数</div>
<div class="a" style="left:1056px;top:540px;width:1px;height:14px;background:#d0d0d0"></div>
<div class="t" style="left:1059px;top:543px;font-size:9.5px;color:#666"></div>
<svg style="left:468px;top:543px" width="10" height="6"><path d="M1.5 4.5 H8.5 L5 1 Z" fill="#777"/></svg>
<div class="a" style="left:224px;top:573px;width:832px;height:1px;background:#e3e3e3"></div>
<div class="t" style="left:227px;top:560.5px;font-size:10px;letter-spacing:-0.3px;color:#333">AFSZ003438</div>
<div class="t" style="left:308px;top:560.5px;font-size:10px;letter-spacing:-0.3px;color:#333">1003438-066</div>
<div class="t" style="left:396px;top:560.5px;font-size:10px;letter-spacing:-0.3px;color:#333">4500365582</div>
<div class="t" style="left:485px;top:560.5px;font-size:10px;letter-spacing:-0.3px;color:#333">AFCR1373018</div>
<div class="t" style="left:574px;top:560.5px;font-size:10px;letter-spacing:-0.3px;color:#333">61176</div>
<div class="t" style="left:642px;top:560.5px;width:68px;text-align:right;font-size:10px;letter-spacing:-0.3px;color:#333">0</div>
<div class="t" style="left:717px;top:560.5px;font-size:10px;letter-spacing:-0.3px;color:#333"></div>
<div class="t" style="left:790px;top:560.5px;font-size:10px;letter-spacing:-0.3px;color:#333">701</div>
<div class="t" style="left:887px;top:560.5px;font-size:10px;letter-spacing:-0.3px;color:#333">电金部</div>
<div class="t" style="left:989px;top:560.5px;width:64px;text-align:right;font-size:10px;letter-spacing:-0.3px;color:#333">3</div>
<div class="a" style="left:224px;top:589px;width:832px;height:1px;background:#e3e3e3"></div>
<div class="t" style="left:227px;top:576.5px;font-size:10px;letter-spacing:-0.3px;color:#333">AFSZ003438</div>
<div class="t" style="left:308px;top:576.5px;font-size:10px;letter-spacing:-0.3px;color:#333">1003438-071</div>
<div class="t" style="left:396px;top:576.5px;font-size:10px;letter-spacing:-0.3px;color:#333">4500365582</div>
<div class="t" style="left:485px;top:576.5px;font-size:10px;letter-spacing:-0.3px;color:#333">AFCR1373018</div>
<div class="t" style="left:574px;top:576.5px;font-size:10px;letter-spacing:-0.3px;color:#333">61176</div>
<div class="t" style="left:642px;top:576.5px;width:68px;text-align:right;font-size:10px;letter-spacing:-0.3px;color:#333">0</div>
<div class="t" style="left:717px;top:576.5px;font-size:10px;letter-spacing:-0.3px;color:#333"></div>
<div class="t" style="left:790px;top:576.5px;font-size:10px;letter-spacing:-0.3px;color:#333">701</div>
<div class="t" style="left:887px;top:576.5px;font-size:10px;letter-spacing:-0.3px;color:#333">电金部</div>
<div class="t" style="left:989px;top:576.5px;width:64px;text-align:right;font-size:10px;letter-spacing:-0.3px;color:#333">3</div>
<div class="a" style="left:224px;top:606px;width:832px;height:1px;background:#e3e3e3"></div>
<div class="t" style="left:227px;top:593.5px;font-size:10px;letter-spacing:-0.3px;color:#333">AFSZ003716</div>
<div class="t" style="left:308px;top:593.5px;font-size:10px;letter-spacing:-0.3px;color:#333">1003716-002</div>
<div class="t" style="left:396px;top:593.5px;font-size:10px;letter-spacing:-0.3px;color:#333">4500367847</div>
<div class="t" style="left:485px;top:593.5px;font-size:10px;letter-spacing:-0.3px;color:#333">YHE0025005UQ</div>
<div class="t" style="left:574px;top:593.5px;font-size:10px;letter-spacing:-0.3px;color:#333"></div>
<div class="t" style="left:642px;top:593.5px;width:68px;text-align:right;font-size:10px;letter-spacing:-0.3px;color:#333">0</div>
<div class="t" style="left:717px;top:593.5px;font-size:10px;letter-spacing:-0.3px;color:#333"></div>
<div class="t" style="left:790px;top:593.5px;font-size:10px;letter-spacing:-0.3px;color:#333">901</div>
<div class="t" style="left:887px;top:593.5px;font-size:10px;letter-spacing:-0.3px;color:#333">出口部</div>
<div class="t" style="left:989px;top:593.5px;width:64px;text-align:right;font-size:10px;letter-spacing:-0.3px;color:#333">78</div>
<div class="a" style="left:224px;top:622px;width:832px;height:1px;background:#e3e3e3"></div>
<div class="t" style="left:227px;top:609.5px;font-size:10px;letter-spacing:-0.3px;color:#333">AFSZ003716</div>
<div class="t" style="left:308px;top:609.5px;font-size:10px;letter-spacing:-0.3px;color:#333">1003716-003</div>
<div class="t" style="left:396px;top:609.5px;font-size:10px;letter-spacing:-0.3px;color:#333">4500367847</div>
<div class="t" style="left:485px;top:609.5px;font-size:10px;letter-spacing:-0.3px;color:#333">YHN0024005</div>
<div class="t" style="left:574px;top:609.5px;font-size:10px;letter-spacing:-0.3px;color:#333"></div>
<div class="t" style="left:642px;top:609.5px;width:68px;text-align:right;font-size:10px;letter-spacing:-0.3px;color:#333">0</div>
<div class="t" style="left:717px;top:609.5px;font-size:10px;letter-spacing:-0.3px;color:#333"></div>
<div class="t" style="left:790px;top:609.5px;font-size:10px;letter-spacing:-0.3px;color:#333">901</div>
<div class="t" style="left:887px;top:609.5px;font-size:10px;letter-spacing:-0.3px;color:#333">出口部</div>
<div class="t" style="left:989px;top:609.5px;width:64px;text-align:right;font-size:10px;letter-spacing:-0.3px;color:#333">30</div>
<div class="a" style="left:224px;top:639px;width:832px;height:1px;background:#e3e3e3"></div>
<div class="t" style="left:227px;top:626.5px;font-size:10px;letter-spacing:-0.3px;color:#333">AFSZ003716</div>
<div class="t" style="left:308px;top:626.5px;font-size:10px;letter-spacing:-0.3px;color:#333">1003716-004</div>
<div class="t" style="left:396px;top:626.5px;font-size:10px;letter-spacing:-0.3px;color:#333">4500367847</div>
<div class="t" style="left:485px;top:626.5px;font-size:10px;letter-spacing:-0.3px;color:#333">YHE0008005UQ</div>
<div class="t" style="left:574px;top:626.5px;font-size:10px;letter-spacing:-0.3px;color:#333"></div>
<div class="t" style="left:642px;top:626.5px;width:68px;text-align:right;font-size:10px;letter-spacing:-0.3px;color:#333">0</div>
<div class="t" style="left:717px;top:626.5px;font-size:10px;letter-spacing:-0.3px;color:#333"></div>
<div class="t" style="left:790px;top:626.5px;font-size:10px;letter-spacing:-0.3px;color:#333">901</div>
<div class="t" style="left:887px;top:626.5px;font-size:10px;letter-spacing:-0.3px;color:#333">出口部</div>
<div class="t" style="left:989px;top:626.5px;width:64px;text-align:right;font-size:10px;letter-spacing:-0.3px;color:#333">62</div>
<div class="a" style="left:304px;top:557px;width:1px;height:83px;background:#e3e3e3"></div>
<div class="a" style="left:392px;top:557px;width:1px;height:83px;background:#e3e3e3"></div>
<div class="a" style="left:481px;top:557px;width:1px;height:83px;background:#e3e3e3"></div>
<div class="a" style="left:570px;top:557px;width:1px;height:83px;background:#e3e3e3"></div>
<div class="a" style="left:642px;top:557px;width:1px;height:83px;background:#e3e3e3"></div>
<div class="a" style="left:713px;top:557px;width:1px;height:83px;background:#e3e3e3"></div>
<div class="a" style="left:786px;top:557px;width:1px;height:83px;background:#e3e3e3"></div>
<div class="a" style="left:883px;top:557px;width:1px;height:83px;background:#e3e3e3"></div>
<div class="a" style="left:989px;top:557px;width:1px;height:83px;background:#e3e3e3"></div>
<div class="a" style="left:1056px;top:557px;width:13px;height:82px;background:#ececec"></div>
<div class="a" style="left:1056px;top:557px;width:13px;height:13px;border:1px solid #b8b8b8;background:#fff"></div>
<div class="a" style="left:1056px;top:580px;width:13px;height:13px;border:1px solid #b8b8b8;background:#fff"></div>
<div class="a" style="left:1056px;top:625px;width:13px;height:13px;border:1px solid #b8b8b8;background:#fff"></div>
<svg style="left:1056px;top:557px" width="13" height="82"><path d="M4 8 H9 L6.5 5.2 Z M4 73.5 H9 L6.5 76.3 Z" fill="#555"/></svg>
</body></html>
